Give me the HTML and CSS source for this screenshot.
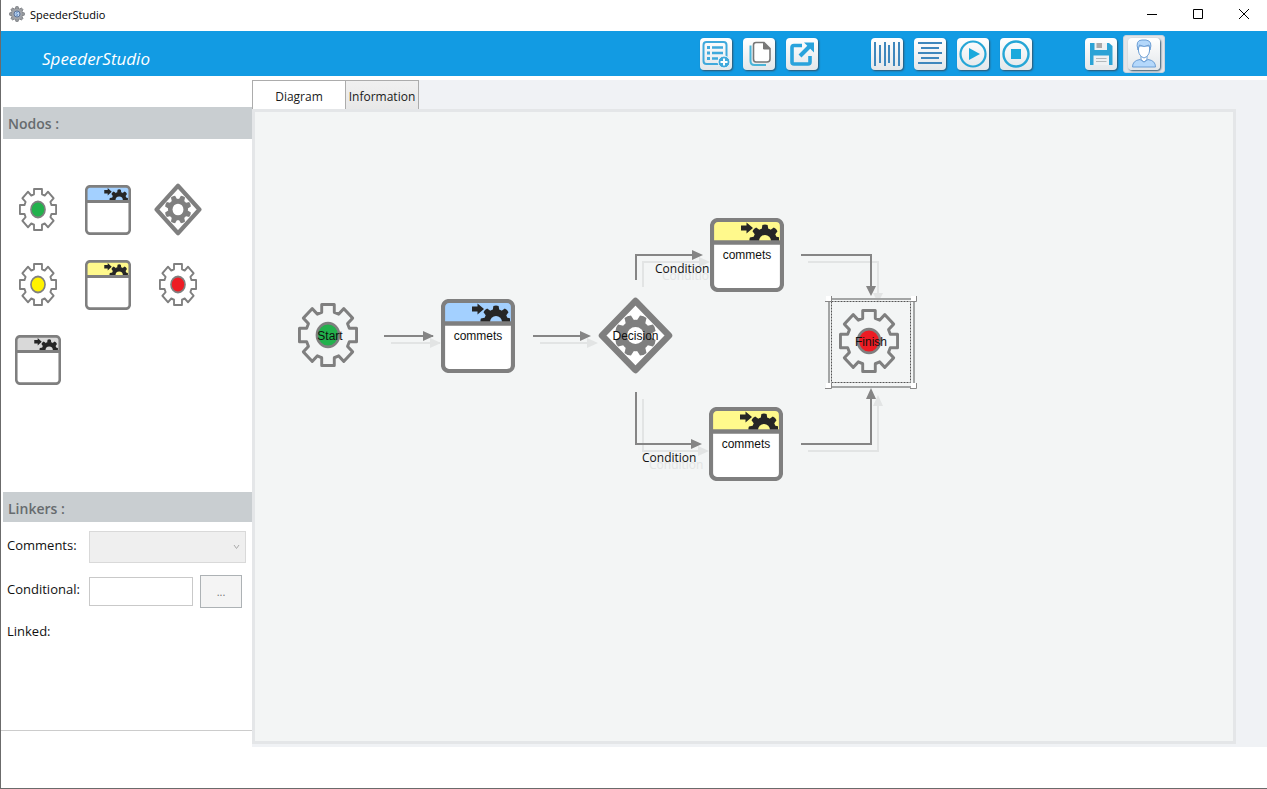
FILE: index.html
```html
<!DOCTYPE html>
<html lang="en">
<head>
<meta charset="utf-8">
<title>SpeederStudio</title>
<link rel="stylesheet" href="styles.css">
</head>
<body>
<svg class="defs" aria-hidden="true">
  <defs>
    <path id="cog" d="M-6.5-22V-29.5H6.5V-22L11-20.2L16.3-25.5L25.5-16.3L20.2-11L22-6.5H29.5V6.5H22L20.2 11L25.5 16.3L16.3 25.5L11 20.2L6.5 22V29.5H-6.5V22L-11 20.2L-16.3 25.5L-25.5 16.3L-20.2 11L-22 6.5H-29.5V-6.5H-22L-20.2-11L-25.5-16.3L-16.3-25.5L-11-20.2Z"/>
    <g id="solid-cog">
      <circle r="22.500"/>
      <path d="M-5-29Q0-31 5-29L6.500-20H-6.500ZM-5 29Q0 31 5 29L6.500 20H-6.500ZM-29-5Q-31 0-29 5L-20 6.500V-6.500ZM29-5Q31 0 29 5L20 6.500V-6.500Z"/>
      <path transform="rotate(45)" d="M-5-29Q0-31 5-29L6.500-20H-6.500ZM-5 29Q0 31 5 29L6.500 20H-6.500ZM-29-5Q-31 0-29 5L-20 6.500V-6.500ZM29-5Q31 0 29 5L20 6.500V-6.500Z"/>
    </g>
    <clipPath id="head-clip"><rect x="4" y="4" width="65" height="19"/></clipPath>
  </defs>
  <symbol id="gear" viewBox="-31 -31 62 62" preserveAspectRatio="none">
    <use href="#cog" fill="none" stroke="#7f7f7f" stroke-width="3" stroke-linejoin="round"/>
    <circle r="11.500" fill="currentColor" stroke="#7f7f7f" stroke-width="2.600"/>
  </symbol>
  <symbol id="task" viewBox="0 0 74 74" preserveAspectRatio="none">
    <rect x="2" y="2" width="70" height="70" rx="6" fill="#fff"/>
    <path d="M2 24V8Q2 2 8 2H66Q72 2 72 8V24Z" fill="currentColor"/>
    <g clip-path="url(#head-clip)">
      <use href="#solid-cog" transform="translate(55 22) scale(.52)" fill="#262626"/>
      <circle cx="55" cy="23" r="6" fill="currentColor"/>
    </g>
    <path d="M31 7.500h5.500V4.500L43 10l-6.500 5.500v-3H31z" fill="#262626"/>
    <rect x="2" y="2" width="70" height="70" rx="6" fill="none" stroke="#7f7f7f" stroke-width="4.200"/>
    <path d="M2 24.500H72" stroke="#7f7f7f" stroke-width="4.400"/>
  </symbol>
  <symbol id="decision" viewBox="0 0 75 77" preserveAspectRatio="none">
    <path d="M37.500 4L71 38.500L37.500 73L4 38.500Z" fill="#fff" stroke="#7f7f7f" stroke-width="6.500" stroke-linejoin="round"/>
    <use href="#solid-cog" transform="translate(37.500 38.500) rotate(22.500) scale(.7)" fill="#7f7f7f"/>
    <circle cx="37.500" cy="38.500" r="8.500" fill="#fff"/>
  </symbol>
</svg>

<header class="titlebar">
  <svg class="app-icon" viewBox="-32 -32 64 64" aria-hidden="true">
    <use href="#solid-cog" fill="#9a9da2" stroke="#74777c" stroke-width="3"/>
    <circle r="22" fill="#a0a3a8"/>
    <circle r="12" fill="#c4d8f0" stroke="#587299" stroke-width="4"/>
    <path d="M5-5C1-8-5-6-4-2S5 1 4 4-3 6-6 4" fill="none" stroke="#4d7fc0" stroke-width="3"/>
  </svg>
  <span class="window-title">SpeederStudio</span>
  <div class="window-buttons">
    <button type="button" aria-label="Minimize"><svg viewBox="0 0 12 12"><path d="M1 6.500H11"/></svg></button>
    <button type="button" aria-label="Maximize"><svg viewBox="0 0 12 12"><path d="M1.500 1.500H10.500V10.500H1.500Z"/></svg></button>
    <button type="button" aria-label="Close"><svg viewBox="0 0 12 12"><path d="M1 1L11 11M11 1L1 11"/></svg></button>
  </div>
</header>

<div class="banner">
  <h1 class="brand">SpeederStudio</h1>
  <div class="toolbar">
    <div class="tool-group">
      <button class="tool" type="button" aria-label="New form"><svg viewBox="0 0 32 32" fill="none" stroke="#3fa9dc"><rect x="3.500" y="4" width="23" height="22" rx="3" stroke-width="2"/><path d="M12 9.500H23M12 15H23M12 20.500H18" stroke-width="2.400"/><path d="M7 9.500h3M7 15h3M7 20.500h3" stroke-width="3"/><circle cx="24" cy="24" r="6" fill="#3fa9dc" stroke="#f4f8fb"/><path d="M20.500 24h7M24 20.500v7" stroke="#fff" stroke-width="2"/></svg></button>
      <button class="tool" type="button" aria-label="Copy"><svg viewBox="0 0 32 32" fill="none"><path d="M7.500 7.500V23Q7.500 27 11.500 27H23" stroke="#49b4d8" stroke-width="2"/><path d="M13 4.500H21L27 10.500V21Q27 24 24 24H13Q10.500 24 10.500 21V7Q10.500 4.500 13 4.500Z" fill="#fff" stroke="#777" stroke-width="1.600"/><path d="M20.500 5V11H27Z" fill="#777" stroke="#777"/></svg></button>
      <button class="tool" type="button" aria-label="Export"><svg viewBox="0 0 32 32" fill="none" stroke="#29a3dc"><path d="M16 7.500H8Q6 7.500 6 9.500V24Q6 26 8 26H22Q24 26 24 24V18" stroke-width="3.600"/><path d="M14 18L24 8" stroke-width="4"/><path d="M18 4.500H28V14.500Z" fill="#29a3dc" stroke="none"/></svg></button>
    </div>
    <div class="tool-group">
      <button class="tool" type="button" aria-label="Align vertically"><svg viewBox="0 0 32 32" stroke="#3f87bd" stroke-width="2"><path d="M4 4V28M9 7V25M14 4V28M18 7V25M23 4V28M28 4V28"/></svg></button>
      <button class="tool" type="button" aria-label="Align horizontally"><svg viewBox="0 0 32 32" stroke="#3f87bd" stroke-width="2"><path d="M4 5H28M7 10H25M4 15H28M7 20H25M4 25H28"/></svg></button>
      <button class="tool" type="button" aria-label="Run"><svg viewBox="0 0 32 32"><circle cx="16" cy="16" r="12.500" fill="none" stroke="#26a6d6" stroke-width="2.200"/><path d="M12 10L23 16L12 22Z" fill="#1ba9dc"/></svg></button>
      <button class="tool" type="button" aria-label="Stop"><svg viewBox="0 0 32 32"><circle cx="16" cy="16" r="12.500" fill="none" stroke="#26a6d6" stroke-width="2.400"/><path d="M11 11H21V21H11Z" fill="#1ba9dc"/></svg></button>
    </div>
    <div class="tool-group tool-group-tight">
      <button class="tool" type="button" aria-label="Save"><svg viewBox="0 0 32 32"><path d="M5 5H24L27.500 8V27H5Z" fill="#2ba3d6"/><path d="M9.500 5H22V12H9.500Z" fill="#eef1f3"/><path d="M11.500 5H17V10H11.500Z" fill="#aaa"/><path d="M8.500 17.500H24V27H8.500Z" fill="#eef1f3"/><path d="M11 20.500H21.500M11 23.500H21.500" stroke="#b2b8bb"/></svg></button>
      <div class="tool-frame"><button class="tool" type="button" aria-label="User"><svg viewBox="0 0 32 32" stroke="#6d9fd5" stroke-width="1"><path d="M4.500 29Q4.500 22.500 12 21.500L16 24L20 21.500Q27.500 22.500 27.500 29Z" fill="#b4d8fb"/><path d="M13 17V21.500L16 24L19 21.500V17" fill="#fff"/><path d="M10.500 8V13Q11 18 16 20Q21 18 21.500 13V8Z" fill="#fff"/><path d="M10 12Q7 2 14 2H18Q25 3 22 12L21 7Q16 10 11.500 7Z" fill="#b4d8fb"/></svg></button></div>
    </div>
  </div>
</div>

<main class="workspace">
  <aside class="sidebar">
    <h2 class="section-title">Nodos :</h2>
    <div class="palette">
      <button type="button" class="c-green" aria-label="Start node"><svg class="p-gear"><use href="#gear"/></svg></button>
      <button type="button" class="c-blue" aria-label="Input task"><svg class="p-task"><use href="#task"/></svg></button>
      <button type="button" aria-label="Decision node"><svg class="p-decision"><use href="#decision"/></svg></button>
      <button type="button" class="c-yellow" aria-label="Intermediate node"><svg class="p-gear"><use href="#gear"/></svg></button>
      <button type="button" class="c-cream" aria-label="Process task"><svg class="p-task"><use href="#task"/></svg></button>
      <button type="button" class="c-red" aria-label="Finish node"><svg class="p-gear"><use href="#gear"/></svg></button>
      <button type="button" class="c-gray" aria-label="Generic task"><svg class="p-task"><use href="#task"/></svg></button>
    </div>
    <section class="linkers">
      <h2 class="section-title section-title-low">Linkers :</h2>
      <form class="linker-form">
        <label for="comments">Comments:</label>
        <div class="select-box">
          <select id="comments" disabled></select>
          <svg class="chevron" viewBox="0 0 7 6"><path d="M1 1L3.500 4.500L6 1"/></svg>
        </div>
        <label for="conditional">Conditional:</label>
        <div class="conditional-row">
          <input id="conditional" type="text">
          <button class="browse" type="button">...</button>
        </div>
        <span class="linked">Linked:</span>
      </form>
    </section>
  </aside>

  <section class="editor">
    <div class="tabs" role="tablist">
      <button class="tab tab-active" type="button" role="tab" aria-selected="true">Diagram</button>
      <button class="tab tab-info" type="button" role="tab" aria-selected="false">Information</button>
    </div>
    <div class="canvas">
      <svg class="edges" aria-hidden="true">
        <defs>
          <g id="links">
            <path class="line" d="M129 224H178M278 224H326M381 168V143H437M381 280V332H436M546 143H616V174M546 332H616V287"/>
            <path class="tip" d="M168 219V229L179 224ZM325 219V229L336 224ZM437 138V148L448 143ZM436 327V337L447 332ZM611 174H621L616 184ZM611 287H621L616 276Z"/>
          </g>
        </defs>
        <use class="shadow" href="#links" x="7" y="7"/>
        <use class="link" href="#links"/>
      </svg>
      <span class="condition at-upper">Condition</span>
      <span class="condition at-lower">Condition</span>

      <div class="node gear-node at-start c-green"><svg><use href="#gear"/></svg><span>Start</span></div>
      <div class="node task-node at-input c-blue"><svg><use href="#task"/></svg><span>commets</span></div>
      <div class="node decision-node at-decision"><svg><use href="#decision"/></svg><span>Decision</span></div>
      <div class="node task-node at-top c-cream"><svg><use href="#task"/></svg><span>commets</span></div>
      <div class="node task-node at-bottom c-cream"><svg><use href="#task"/></svg><span>commets</span></div>
      <svg class="selection" viewBox="0 0 92 94" aria-hidden="true">
        <path d="M4 3H89M4 3V91M89 3V91M4 91H89" fill="none" stroke="#a3a5a5" stroke-width="2"/>
        <path d="M6.500 5.500H85.500V86.500H6.500Z" fill="none" stroke="#555" stroke-dasharray="2 1"/>
        <path d="M1 0H6V5H1ZM86 0H91V5H86ZM1 87H6V92H1ZM86 87H91V92H86Z" fill="#fff"/>
        <path d="M0 5.500H6.500V0M85 5.500H91.500V0M0 92.500H6.500V87M85 92.500H91.500V87" fill="none" stroke="#888"/>
      </svg>
      <div class="node gear-node at-finish c-red"><svg><use href="#gear"/></svg><span>Finish</span></div>
    </div>
  </section>
</main>
</body>
</html>
```

FILE: styles.css
```css
* { box-sizing: border-box; }

body {
  margin: 0;
  min-height: 100vh;
  display: flex;
  flex-direction: column;
  padding-bottom: 41px;
  border-left: 1px solid #6b6b6b;
  border-bottom: 1px solid #6b6b6b;
  background: #fff;
  color: #1a1a1a;
  font-family: "Open Sans", "Noto Sans", sans-serif;
  font-size: 13px;
}

button {
  padding: 0;
  border: 0;
  background: none;
  color: inherit;
  font: inherit;
}

svg { display: block; }

.defs { position: absolute; width: 0; height: 0; }

/* Title bar */
.titlebar {
  height: 31px;
  display: flex;
  align-items: center;
  padding-left: 8px;
  font-size: 11px;
  color: #000;
}
.app-icon { width: 16px; height: 16px; margin-bottom: 3px; }
.window-title { flex: 1; margin: 0 0 2px 5px; }
.window-buttons { display: flex; margin-bottom: 3px; }
.window-buttons button { width: 46px; height: 28px; display: grid; place-items: center; }
.window-buttons svg { width: 12px; height: 12px; fill: none; stroke: #000; stroke-width: 1; }

/* Banner and toolbar */
.banner {
  height: 45px;
  display: flex;
  align-items: center;
  justify-content: space-between;
  padding: 0 102px 0 41px;
  background: #129be3;
}
.brand {
  margin: 10px 0 0;
  color: #fff;
  font-size: 17px;
  font-style: italic;
  font-weight: 400;
}
.toolbar { display: flex; align-items: center; gap: 53px; }
.tool-group { display: flex; align-items: center; gap: 11px; }
.tool-group-tight { gap: 6px; }
.tool {
  width: 32px;
  height: 32px;
  border-radius: 4px;
  background: linear-gradient(#fff, #e3e7ea);
  box-shadow: 1px 1px 2px #31536b;
}
.tool svg { width: 32px; height: 32px; }
.tool-frame {
  width: 42px;
  height: 38px;
  display: grid;
  place-items: center;
  border: 1px solid #c9d3dc;
  border-radius: 3px;
  background: #e4e5e8;
}

/* Sidebar */
.workspace { flex: 1; display: flex; }
.sidebar {
  width: 251px;
  flex: none;
  display: flex;
  flex-direction: column;
  padding: 31px 0 16px;
}
.section-title {
  height: 32px;
  margin: 0 0 0 2px;
  padding-left: 5px;
  background: #c9ced1;
  color: #666b6e;
  font-size: 14px;
  font-weight: 600;
  line-height: 33px;
}
.section-title-low { height: 30px; }
.palette {
  flex: 1;
  display: grid;
  grid-template-columns: repeat(3, 70px);
  grid-auto-rows: 75px;
  padding: 33px 0 0 2px;
}
.palette button { display: grid; place-items: center; }
.p-gear { width: 38px; height: 43px; }
.p-task { width: 46px; height: 50px; }
.p-decision { width: 48px; height: 53px; }

.c-green { --node: #22b14c; }
.c-blue { --node: #a3d0ff; }
.c-yellow { --node: #fff200; }
.c-cream { --node: #fff98c; }
.c-red { --node: #ed1c24; }
.c-gray { --node: #d9d9d9; }
.palette svg, .node svg { color: var(--node); }

.linkers { min-height: 239px; border-bottom: 1px solid #ccc; }
.linker-form {
  display: grid;
  grid-template-columns: 76px minmax(0, 1fr);
  grid-template-rows: 32px 33px 32px;
  gap: 12px 6px;
  padding: 9px 6px 0;
  color: #111;
}
.linker-form label { line-height: 28px; white-space: nowrap; }
.linked { line-height: 22px; }
.select-box { position: relative; }
.select-box select {
  width: 100%;
  height: 32px;
  appearance: none;
  border: 1px solid #d9d9d9;
  border-radius: 0;
  background: #efefef;
  opacity: 1;
}
.chevron {
  position: absolute;
  right: 6px;
  top: 13px;
  width: 7px;
  height: 6px;
  fill: none;
  stroke: #aaa;
}
.conditional-row { display: flex; align-items: center; gap: 7px; padding-right: 4px; }
.conditional-row input {
  min-width: 0;
  flex: 1;
  height: 29px;
  border: 1px solid #c9c9c9;
  background: #fff;
}
.browse {
  width: 42px;
  height: 33px;
  flex: none;
  border: 1px solid #adb2b5;
  background: #f4f4f4;
  color: #777;
  font-size: 11px;
}

/* Editor */
.editor {
  flex: 1;
  display: flex;
  flex-direction: column;
  margin-top: 4px;
  padding: 0 31px 3px 0;
  background: #f0f2f5;
}
.tabs { display: flex; height: 29px; }
.tab {
  padding-top: 2px;
  border: 1px solid #acacac;
  border-bottom: 0;
  border-left: 0;
  font-size: 12px;
}
.tab-active {
  width: 94px;
  border-left: 1px solid #acacac;
  background: #fff;
}
.tab-info { width: 73px; background: linear-gradient(#f0f0f0, #e8e8e8); }
.canvas {
  position: relative;
  flex: 1;
  border: 3px solid #e4e6e8;
  background: #f3f5f5;
}

/* Diagram */
.edges { position: absolute; inset: 0; width: 100%; height: 100%; }
.line { fill: none; stroke: currentColor; stroke-width: 2; }
.tip { fill: currentColor; }
.link { color: #858585; }
.shadow { color: #e2e4e4; }
.condition {
  position: absolute;
  color: #111;
  font-size: 12px;
  line-height: 16px;
  text-shadow: 7px 7px 0 #e2e4e4;
}
.at-upper { left: 400px; top: 149px; }
.at-lower { left: 387px; top: 338px; }

.node {
  position: absolute;
  display: grid;
  place-items: center;
  color: #111;
  font-family: "Liberation Sans", Arial, sans-serif;
  font-size: 12px;
  line-height: 16px;
}
.node > * { grid-area: 1 / 1; }
.node > span { z-index: 1; }
.node svg { width: 100%; height: 100%; }
.gear-node { width: 60px; height: 64px; }
.gear-node > span { padding: 2px 0 0 4px; }
.task-node { width: 74px; height: 74px; }
.decision-node { width: 75px; height: 77px; }
.at-start { left: 43px; top: 191px; }
.at-input { left: 186px; top: 187px; }
.at-decision { left: 343px; top: 185px; }
.at-top { left: 455px; top: 106px; }
.at-bottom { left: 454px; top: 295px; }
.at-finish { left: 584px; top: 197px; }
.selection { position: absolute; left: 570px; top: 184px; width: 92px; height: 94px; }
```
